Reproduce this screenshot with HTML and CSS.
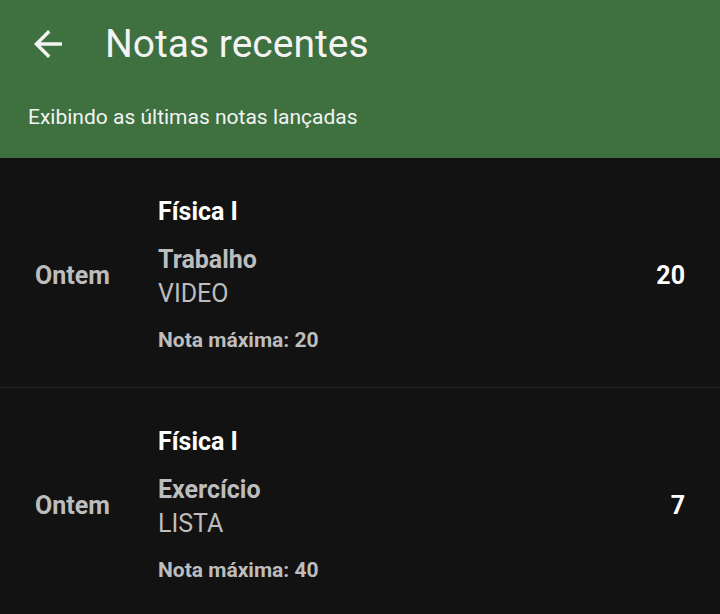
FILE: index.html
```html
<!DOCTYPE html>
<html lang="pt-BR">
<head>
    <meta charset="UTF-8">
    <meta name="viewport" content="width=device-width, initial-scale=1.0">
    <title>Notas recentes</title>
    <link rel="stylesheet" href="styles.css">
</head>
<body>
    <div class="header">
        <div class="toolbar">
            <svg class="back" viewBox="0 0 24 24" width="42" height="42">
                <path d="M20 11H7.83l5.59-5.59L12 4l-8 8 8 8 1.41-1.41L7.83 13H20v-2z" fill="#f3f3f3"/>
            </svg>
            <h1>Notas recentes</h1>
        </div>
        <p class="subtitle">Exibindo as últimas notas lançadas</p>
    </div>
    <div class="list">
        <div class="grade-row">
            <div class="date">Ontem</div>
            <div class="info">
                <div class="course">Física I</div>
                <div class="activity">Trabalho</div>
                <div class="kind">VIDEO</div>
                <div class="max">Nota máxima: 20</div>
            </div>
            <div class="value">20</div>
        </div>
        <div class="grade-row">
            <div class="date">Ontem</div>
            <div class="info">
                <div class="course">Física I</div>
                <div class="activity">Exercício</div>
                <div class="kind">LISTA</div>
                <div class="max">Nota máxima: 40</div>
            </div>
            <div class="value">7</div>
        </div>
    </div>
</body>
</html>
```

FILE: styles.css
```css
body {
    margin: 0;
    padding: 0;
    background-color: #121212;
    font-family: Roboto, "Noto Sans", sans-serif;
}
.header {
    background-color: #3e7040;
    color: #f3f3f3;
    height: 158px;
    box-sizing: border-box;
}
.toolbar {
    display: flex;
    align-items: center;
    height: 88px;
    padding-left: 27px;
}
.back {
    display: block;
    margin-right: 36px;
}
.toolbar h1 {
    margin: 0;
    font-size: 39px;
    font-weight: 400;
}
.subtitle {
    margin: 0;
    padding-left: 28px;
    padding-top: 17px;
    font-size: 21px;
}
.grade-row {
    display: flex;
    align-items: center;
    height: 229px;
    border-bottom: 1px solid #272727;
    padding: 0 35px;
}
.date {
    width: 123px;
    padding-top: 6px;
    color: #bdbdbd;
    font-size: 25px;
    font-weight: 700;
}
.info {
    flex: 1;
    padding-top: 4px;
}
.course {
    color: #ffffff;
    font-size: 25px;
    font-weight: 700;
    line-height: 32px;
}
.activity {
    color: #bdbdbd;
    font-size: 25px;
    font-weight: 700;
    line-height: 32px;
    margin-top: 16px;
}
.kind {
    color: #bdbdbd;
    font-size: 25px;
    line-height: 35px;
}
.max {
    color: #bdbdbd;
    font-size: 21px;
    font-weight: 700;
    line-height: 28px;
    margin-top: 15px;
}
.value {
    padding-top: 5px;
    color: #ffffff;
    font-size: 25px;
    font-weight: 700;
}
```
